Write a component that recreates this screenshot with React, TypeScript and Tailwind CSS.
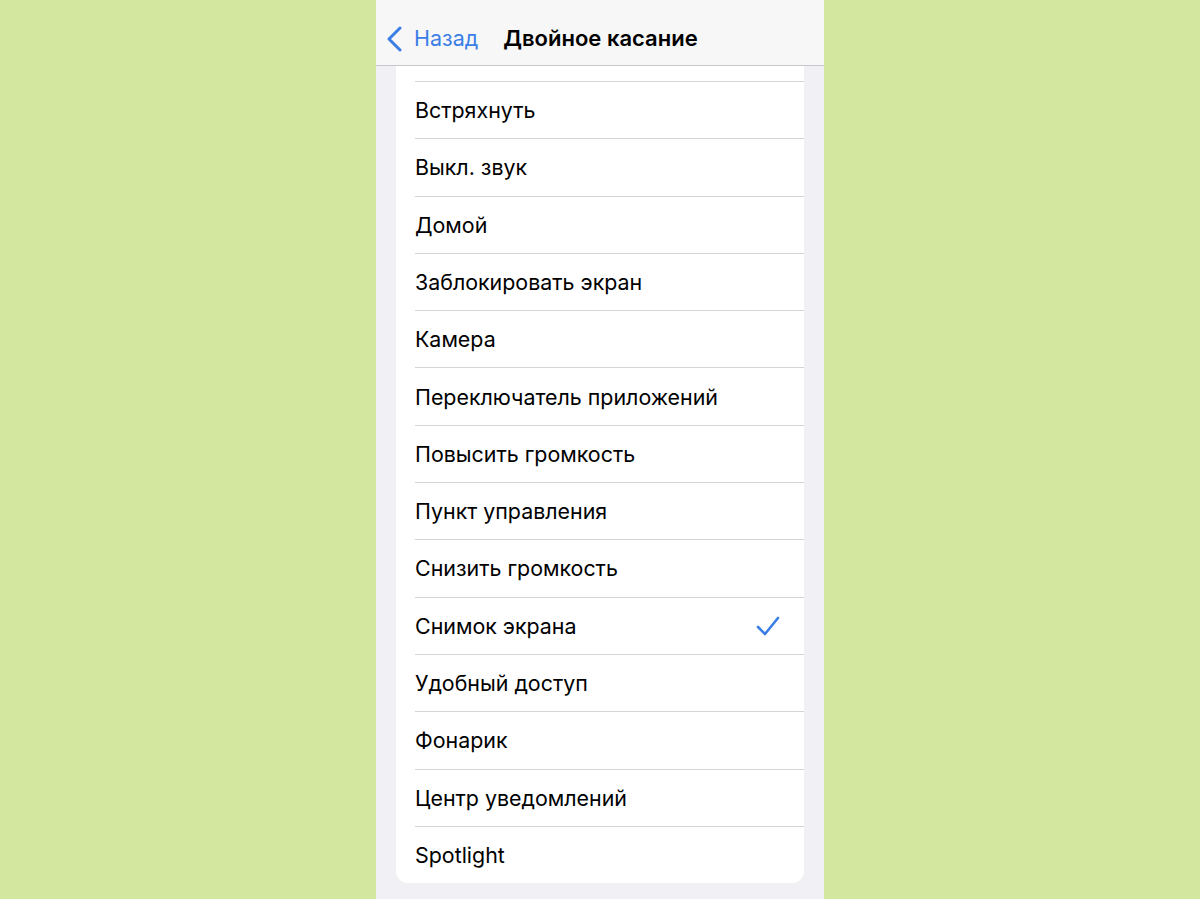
const items = [
  'Встряхнуть',
  'Выкл. звук',
  'Домой',
  'Заблокировать экран',
  'Камера',
  'Переключатель приложений',
  'Повысить громкость',
  'Пункт управления',
  'Снизить громкость',
  'Снимок экрана',
  'Удобный доступ',
  'Фонарик',
  'Центр уведомлений',
  'Spotlight',
]

export default function App() {
  return (
    <div
      className="flex h-[899px] w-full justify-center overflow-hidden bg-[#d3e79f]"
      style={{ fontFamily: 'Inter, "Noto Sans", sans-serif' }}
    >
      <div className="flex w-[448px] flex-col bg-[#f0f0f5]">
        <div className="flex h-[66px] items-center border-b border-[#c8c8cc] bg-[#f7f7f7] pl-[10px] pt-[11px]">
          <svg width="18" height="26" viewBox="0 0 18 26" className="mt-[1px]">
            <path d="M14 2 L3 13 L14 24" fill="none" stroke="#3a7ee6" strokeWidth="3" strokeLinecap="round" strokeLinejoin="round" />
          </svg>
          <span className="ml-[10px] text-[21.5px] text-[#3a7ee6]">Назад</span>
          <span className="ml-[25px] text-[22px] font-semibold text-black">Двойное касание</span>
        </div>
        <div className="mx-[20px] rounded-b-[12px] bg-white pl-[19px]">
          <div className="h-[15px]" />
          {items.map((it) => (
            <div key={it} className="flex h-[57.3px] items-center border-t border-[#d4d4d8] pr-[24px]">
              <span className="flex-1 text-[21.4px] text-black">{it}</span>
              {it === 'Снимок экрана' && (
                <svg width="24" height="22" viewBox="0 0 24 22">
                  <path d="M2 12 L9 19 L22 3" fill="none" stroke="#3a7ee6" strokeWidth="2.6" strokeLinecap="round" strokeLinejoin="round" />
                </svg>
              )}
            </div>
          ))}
        </div>
      </div>
    </div>
  )
}
